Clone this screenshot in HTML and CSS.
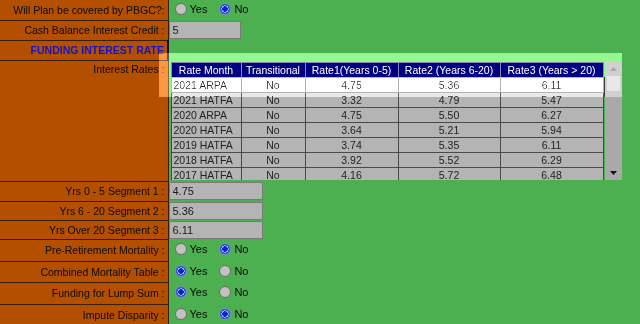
FILE: index.html
```html
<!DOCTYPE html>
<html lang="en">
  <head>
    <meta charset="UTF-8" />
    <title>Plan Assumptions</title>
    <link rel="stylesheet" href="styles.css">
  </head>
  <body>
    <table class="plan">
      <tr class="h20">
        <td class="lbl">Will Plan be covered by PBGC?:</td>
        <td class="val">
          <label class="opt"><input type="radio" name="pbgc"> Yes</label>
          <label class="opt"><input type="radio" name="pbgc" checked> No</label>
        </td>
      </tr>
      <tr class="h20">
        <td class="lbl">Cash Balance Interest Credit :</td>
        <td class="val"><input class="txt short" type="text" value="5"></td>
      </tr>
      <tr class="h20">
        <td class="lbl section">FUNDING INTEREST RATE</td>
        <td class="val"></td>
      </tr>
      <tr class="h121">
        <td class="lbl top">Interest Rates :</td>
        <td class="val rates-cell">
          <div class="rates">
            <div class="rates-scroll">
              <table class="grid">
                <colgroup>
                  <col style="width:70px"><col style="width:64px"><col style="width:93px"><col style="width:102px"><col style="width:103px">
                </colgroup>
                <tr>
                  <th>Rate Month</th><th>Transitional</th><th>Rate1(Years 0-5)</th><th>Rate2 (Years 6-20)</th><th>Rate3 (Years &gt; 20)</th>
                </tr>
                <tr class="sel"><td class="month">2021 ARPA</td><td>No</td><td>4.75</td><td>5.36</td><td>6.11</td></tr>
                <tr><td class="month">2021 HATFA</td><td>No</td><td>3.32</td><td>4.79</td><td>5.47</td></tr>
                <tr><td class="month">2020 ARPA</td><td>No</td><td>4.75</td><td>5.50</td><td>6.27</td></tr>
                <tr><td class="month">2020 HATFA</td><td>No</td><td>3.64</td><td>5.21</td><td>5.94</td></tr>
                <tr><td class="month">2019 HATFA</td><td>No</td><td>3.74</td><td>5.35</td><td>6.11</td></tr>
                <tr><td class="month">2018 HATFA</td><td>No</td><td>3.92</td><td>5.52</td><td>6.29</td></tr>
                <tr><td class="month">2017 HATFA</td><td>No</td><td>4.16</td><td>5.72</td><td>6.48</td></tr>
              </table>
            </div>
            <div class="vbar">
              <span class="btn">
                <svg width="7" height="4" viewBox="0 0 7 4"><path d="M0 4 L3.5 0 L7 4 Z" fill="#888"/></svg>
              </span>
              <span class="thumb"></span>
              <span class="track"></span>
              <span class="btn">
                <svg width="7" height="4" viewBox="0 0 7 4"><path d="M0 0 L7 0 L3.5 4 Z" fill="#111"/></svg>
              </span>
            </div>
          </div>
        </td>
      </tr>
      <tr class="h20">
        <td class="lbl">Yrs 0 - 5 Segment 1 :</td>
        <td class="val"><input class="txt" type="text" value="4.75"></td>
      </tr>
      <tr class="h19">
        <td class="lbl">Yrs 6 - 20 Segment 2 :</td>
        <td class="val"><input class="txt" type="text" value="5.36"></td>
      </tr>
      <tr class="h19">
        <td class="lbl">Yrs Over 20 Segment 3 :</td>
        <td class="val"><input class="txt" type="text" value="6.11"></td>
      </tr>
      <tr class="h22">
        <td class="lbl">Pre-Retirement Mortality :</td>
        <td class="val">
          <label class="opt"><input type="radio" name="preret"> Yes</label>
          <label class="opt"><input type="radio" name="preret" checked> No</label>
        </td>
      </tr>
      <tr class="h21">
        <td class="lbl">Combined Mortality Table :</td>
        <td class="val">
          <label class="opt"><input type="radio" name="combined" checked> Yes</label>
          <label class="opt"><input type="radio" name="combined"> No</label>
        </td>
      </tr>
      <tr class="h22">
        <td class="lbl">Funding for Lump Sum :</td>
        <td class="val">
          <label class="opt"><input type="radio" name="lump" checked> Yes</label>
          <label class="opt"><input type="radio" name="lump"> No</label>
        </td>
      </tr>
      <tr class="h22">
        <td class="lbl">Impute Disparity :</td>
        <td class="val">
          <label class="opt"><input type="radio" name="impute"> Yes</label>
          <label class="opt"><input type="radio" name="impute" checked> No</label>
        </td>
      </tr>
    </table>

    <!-- highlight behind the rates grid -->
    <div class="glow"></div>
  </body>
</html>
```

FILE: styles.css
```css
* {
  margin: 0;
  padding: 0;
  box-sizing: border-box;
}

body {
  background: #4caf50;
  font-family: "Liberation Sans", Arial, sans-serif;
  font-size: 10.5px;
  color: #0a0a0a;
  overflow: hidden;
}

.plan {
  border-collapse: collapse;
  width: 100%;
}

.plan td {
  padding: 0;
}

.h19 { height: 19px; }
.h20 { height: 20px; }
.h21 { height: 21px; }
.h22 { height: 22px; }
.h121 { height: 121px; }

.lbl {
  width: 168px;
  background: #b44f00;
  text-align: right;
  padding-right: 3px !important;
  border-bottom: 1px solid #3a1c00;
  border-right: 1px solid #3a1c00;
  white-space: nowrap;
  vertical-align: middle;
}

.lbl.top {
  vertical-align: top;
  padding-top: 2px !important;
}

.lbl.section {
  color: #1414c8;
  font-weight: bold;
  border-right: 2px solid #111;
}

.val {
  background: #4caf50;
  vertical-align: middle;
}

/* radio groups */
.opt {
  display: inline-flex;
  align-items: center;
  gap: 3px;
  margin-left: 6px;
  margin-right: 3px;
  font-size: 11px;
}

.opt input {
  appearance: none;
  width: 12px;
  height: 12px;
  border-radius: 50%;
  border: 1px solid #6c6c6c;
  background: #c2c2c2;
}

.opt input:checked {
  border-color: #7d8fcf;
  background: radial-gradient(circle, #0b2ab8 0 2.6px, #c9d3ff 3px 3.4px, #2a4ed8 3.8px);
}

/* text boxes */
.txt {
  width: 94px;
  height: 18px;
  background: #b4b4b4;
  border: 1px solid #7a7a7a;
  font-family: "Liberation Sans", Arial, sans-serif;
  font-size: 11px;
  color: #1a1a1a;
  padding: 0 3px;
  display: block;
}

.txt.short {
  width: 72px;
}

/* interest rate grid */
.rates-cell {
  vertical-align: top;
  padding: 2px 0 0 2px !important;
}

.rates {
  position: relative;
  z-index: 1;
  display: flex;
  width: 451px;
  height: 118px;
}

/* lighter band over the first rows and the scrollbar top */
.rates::before,
.rates::after {
  content: "";
  position: absolute;
  background: #3a3a3a;
  mix-blend-mode: color-dodge;
  pointer-events: none;
}

.rates::after {
  left: 0;
  top: 15px;
  width: 434px;
  height: 20px;
}

.rates::before {
  right: 0;
  top: 0;
  width: 17px;
  height: 35px;
  background: #303030;
}

.rates-scroll {
  width: 434px;
  overflow: hidden;
}

.grid {
  border-collapse: collapse;
  table-layout: fixed;
  width: 432px;
}

.grid th {
  background: #000080;
  color: #fff;
  font-weight: normal;
  height: 15px;
  border: 1px solid #8a8ab0;
  white-space: nowrap;
}

.grid td {
  height: 15px;
  background: #b4b4b4;
  border: 1px solid #4a4a4a;
  text-align: center;
  color: #222;
}

.grid td.month {
  text-align: left;
  padding-left: 2px;
}

.grid tr.sel td {
  background: #fff;
  border-color: #8a8a8a;
}

.vbar {
  width: 17px;
  display: flex;
  flex-direction: column;
  background: #a9a9a9;
}

.vbar .btn {
  height: 14px;
  display: flex;
  align-items: center;
  justify-content: center;
}

.vbar .thumb {
  height: 15px;
  margin: 0 2px;
  background: #bcbcbc;
}

.vbar .track {
  flex: 1;
}

.glow {
  position: absolute;
  z-index: 0;
  left: 159px;
  top: 53px;
  width: 463px;
  height: 44px;
  background: rgb(72, 72, 64);
  mix-blend-mode: plus-lighter;
  pointer-events: none;
}
```
